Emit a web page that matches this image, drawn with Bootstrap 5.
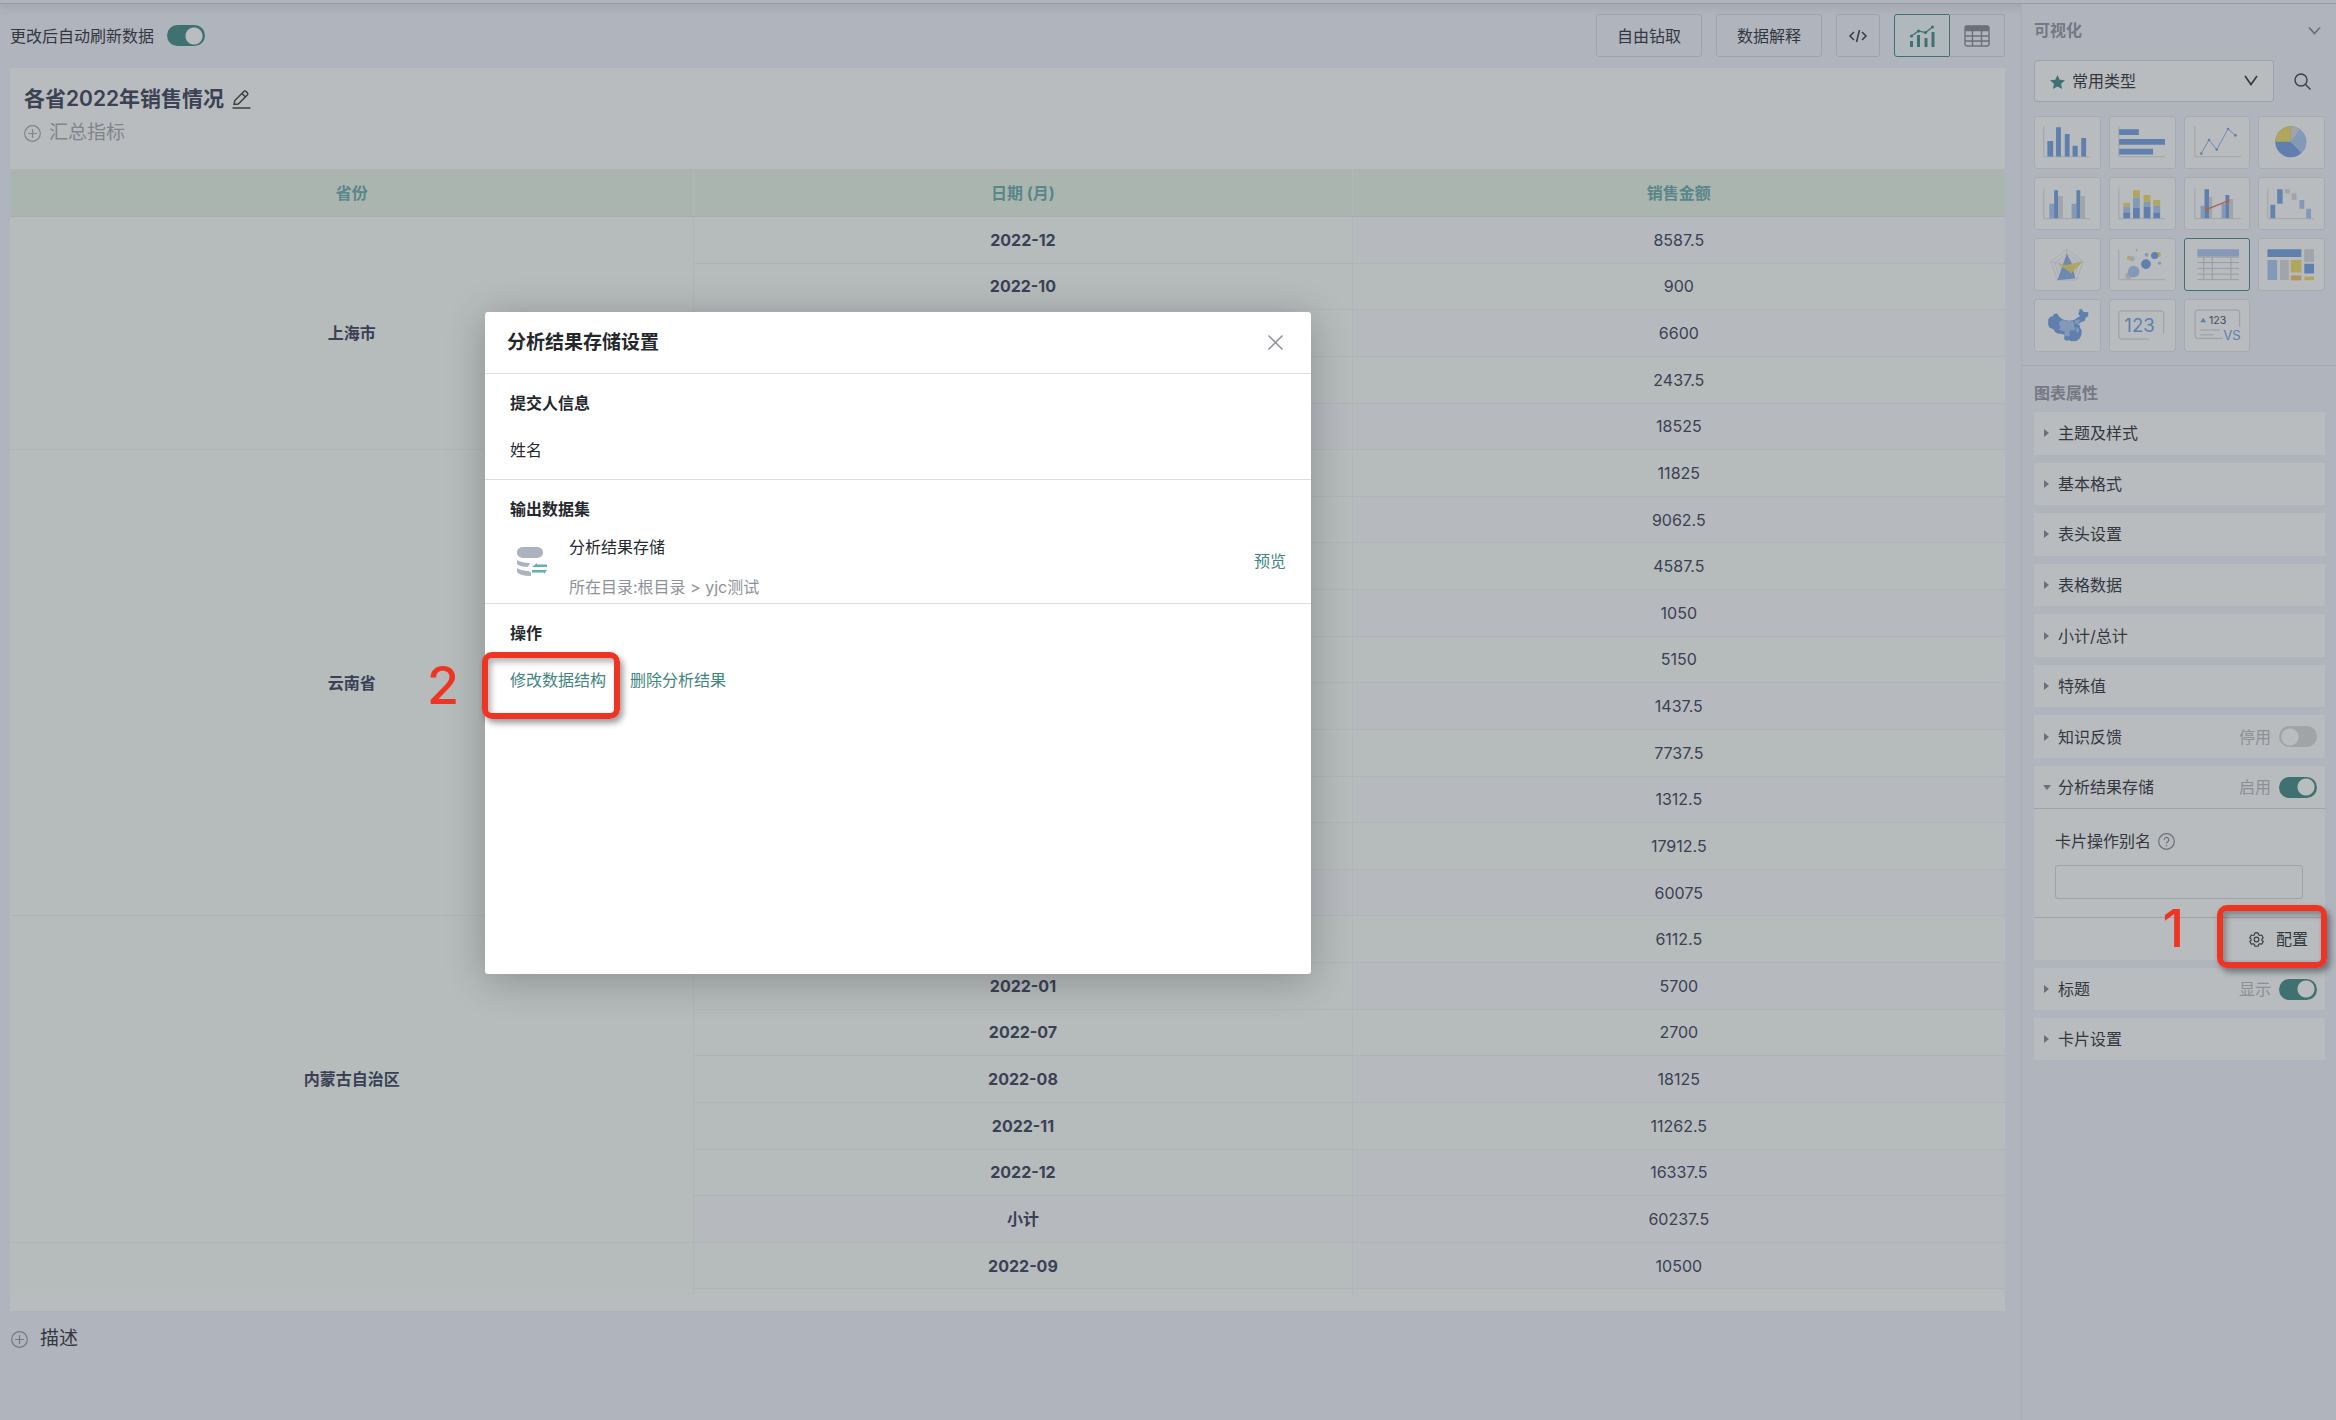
<!DOCTYPE html>
<html lang="zh-CN">
<head>
<meta charset="utf-8">
<meta name="viewport" content="width=device-width, initial-scale=1">
<title>各省2022年销售情况</title>
<link rel="stylesheet" href="https://cdn.jsdelivr.net/npm/bootstrap@5.3.0/dist/css/bootstrap.min.css">
<style>
:root{--page:#b0b4bd;--paper:#b8bcbf;--line:#9da2ab;--soft:#a7abb0;--ink:#33383f;--dim:#747983;--teal:#3f7170;--red:#ee3524;--blue:#5f7fae;--sky:#8499b8;--gold:#b0a65c;--ash:#a1a5a9}
body{background:var(--page);color:var(--ink);font:16px/24px Inter,"Noto Sans CJK SC",sans-serif;min-height:100vh}
button,input,select{font:inherit;color:inherit}
svg{display:block;flex:none}
.topline{height:4px;border-bottom:1px solid #979ba5;box-shadow:0 2px 8px rgba(60,65,80,.25)}
.workarea{padding:10px 16px 0 10px;min-width:0}
.tool-row{height:43px;margin-bottom:11px}
.tool-set{gap:14px}
.tool-btn{height:43px;border:1px solid var(--line);border-radius:3px;background:transparent;padding:0 20px}
.tool-btn.narrow{width:44px;padding:0}
.tool-btn.view{width:56px;padding:0}
.tool-btn.view+.view{border-left:0;margin-left:-1px;border-radius:0 3px 3px 0}
.tool-btn.view.on{border-color:var(--teal);background:#b1b8bd;border-radius:3px 0 0 3px}
.toggler.form-check-input{width:38px;height:21px;margin:0;border:0;border-radius:11px;background-color:#a0a4a6;background-image:radial-gradient(circle at 8px 8px,#b9bdc0 7px,transparent 8px);background-size:16px 16px;background-repeat:no-repeat;background-position:3px center;flex:none;box-shadow:none}
.toggler.form-check-input,.toggler.form-check-input:checked{background-image:radial-gradient(circle at center,#b9bdc0 8px,transparent 9px);background-size:18px 18px;background-position:2px center}
.toggler.form-check-input:checked{background-color:var(--teal);background-position:18px center}
.auto-label{margin-right:13px}
.report{background:var(--paper);padding-bottom:17px}
.report-head{height:101px;padding:17px 14px 0}
.report-head h1{font-size:21px;line-height:28px;font-weight:600;color:#3a4253;margin:0}
.report-head .add-btn{margin-top:6px}
.add-btn{border:0;background:none;padding:0;font-size:19px;line-height:28px;color:#7f848d}
.table-clip{height:1125px;overflow:hidden}
.pivot{height:1167px;width:100%;table-layout:fixed;border-collapse:separate;border-spacing:0;text-align:center;color:#3a4154}
.pivot th,.pivot td{padding:0;vertical-align:middle;border-right:1px solid #b0b6b7;border-bottom:1px solid #afb5b7;background:#b6bbbc}
.pivot tbody tr{height:46px}
.pivot thead th{height:48px;background:#abb5af;color:#588788;border-right-color:#b0b7b6;border-bottom-color:#a5abb7}
.pivot tr>:last-child{border-right:0}
.pivot tbody th{font-weight:700}
.pivot td.a,.pivot th.sum{background:#b6babf}
.pivot .c1{width:34.3%}.pivot .c2{width:33%}
.describe{margin:14px 0 0;padding-left:1px}
.describe .add-btn{color:var(--ink);gap:12px}
.sidebar{width:315px;flex:none;border-left:1px solid #a9adb6;background:#b0b4bd}
.side-title{font-weight:600;color:var(--dim)}
.side-top{padding:14px 11px 13px 12px}
.pick-row{margin-top:18px;gap:20px}
.type-pick{height:42px;width:240px;border:1px solid var(--line);border-radius:3px;background:var(--paper);padding:0 37px;appearance:none;color:var(--ink)}
.pick-box .star{position:absolute;left:16px;top:15px}
.pick-box .arrow{position:absolute;right:16px;top:15px;pointer-events:none}
.plain{border:0;background:none;padding:0}
.kinds{display:grid;grid-template-columns:repeat(4,1fr);gap:8px;margin-top:14px}
.kind{height:53px;border:1px solid var(--soft);border-radius:3px;background:var(--paper);padding:0}
.kind.on{border-color:var(--teal)}
.kind svg{width:100%;height:100%}
.side-bottom{border-top:1px solid #a3a7af;padding:15px 11px 0 12px}
.stack{min-height:346px;margin-top:7px}
.fold{background:var(--paper);min-height:42px;padding:0 8px 0 10px}
.fold .plain{text-align:left}
.state{color:#8b9097}
.opt-body{background:var(--paper);border-top:1px solid var(--line);padding:20px 22px 18px 21px}
.opt-body label{gap:7px;margin-bottom:12px}
.opt-body input{width:100%;height:34px;border:1px solid var(--line);border-radius:3px;background:transparent}
.opt-foot{background:var(--paper);border-top:1px solid var(--line);height:43px;padding-right:17px}
.opt-foot .plain{gap:12px}
.store-modal{position:absolute;left:485px;top:312px;width:826px;height:662px;overflow:visible;color:#24282c}
.store-modal .modal-content{border:0;border-radius:3px;height:662px;box-shadow:0 6px 40px rgba(0,0,0,.24);color:inherit}
.store-modal .modal-header{height:62px;padding:0 26px 0 22px;border-bottom:1px solid #dcdddf}
.store-modal h2{font-size:19px;line-height:28px;font-weight:600;margin:0}
.store-modal h3{font-size:16px;line-height:24px;font-weight:700;margin:0}
.part{padding:17px 25px 0;border-bottom:1px solid #dcdddf}
.part.person{padding-bottom:17px}
.part:last-child{border-bottom:0}
.part-line{margin-top:23px}
.dataset{margin-top:14px;padding-bottom:4px}
.dataset svg{margin:0 21px 12px 7px}
.dataset a{margin-bottom:12px}
.link-row{gap:24px}
.store-modal a{color:#3f8580;text-decoration:none}
.path-text{color:#8d9299}
.callout-box{position:absolute;border:6px solid var(--red);border-radius:10px;box-shadow:3px 4px 6px rgba(0,0,0,.4),inset 3px 4px 6px rgba(0,0,0,.3);pointer-events:none;z-index:1060}
.callout-num{position:absolute;font:500 52px/52px Inter,sans-serif;color:var(--red);z-index:1060}
.box-two{left:482px;top:652px;width:138px;height:67px}
.num-two{left:427px;top:660px}
.box-one{right:9px;top:905px;width:110px;height:63px}
.num-one{right:152px;top:903px}
</style>
<script src="https://cdn.jsdelivr.net/npm/bootstrap@5.3.0/dist/js/bootstrap.bundle.min.js"></script>
</head>
<body class="position-relative d-flex flex-column">
<div class="topline"></div>
<div class="d-flex flex-grow-1">
<main class="workarea flex-grow-1">
  <div class="tool-row d-flex align-items-center">
    <label class="auto-label" for="auto">更改后自动刷新数据</label>
    <input class="form-check-input toggler" type="checkbox" role="switch" id="auto" checked>
    <div class="tool-set d-flex ms-auto">
      <button class="tool-btn" type="button">自由钻取</button>
      <button class="tool-btn" type="button">数据解释</button>
      <button class="tool-btn narrow d-flex align-items-center justify-content-center" type="button" aria-label="代码"><svg width="20" height="16" viewBox="0 0 20 16" fill="none" stroke="#3a3f46" stroke-width="1.6"><path d="M6 4 2 8l4 4M14 4l4 4-4 4M11.500 2 8.500 14"/></svg></button>
      <div class="d-flex">
      <button class="tool-btn view on d-flex align-items-center justify-content-center" type="button" aria-label="图表"><svg width="26" height="22" viewBox="0 0 26 22" fill="#3f7170"><path d="M1 16h3v6H1zM8 10h3v12H8zM15.500 13h3v9h-3zM22.500 7h3v15h-3z"/><path d="M2.500 11 9.500 6l7 1.500L23.500 2" fill="none" stroke="#3f7170" stroke-width="1.200"/><circle cx="2.500" cy="11" r="1.600"/><circle cx="9.500" cy="6" r="1.600"/><circle cx="16.500" cy="7.500" r="1.600"/><circle cx="23.500" cy="2" r="1.600"/></svg></button>
      <button class="tool-btn view d-flex align-items-center justify-content-center" type="button" aria-label="表格"><svg width="26" height="22" viewBox="0 0 26 22" fill="none" stroke="#6b7079" stroke-width="1.400"><rect x="1" y="1" width="24" height="20" rx="2"/><path d="M1 11h24M1 16h24M8.500 6v15M17.500 6v15"/><path d="M2 1.500h22v4H2z" fill="#6b7079"/></svg></button>
      </div>
    </div>
  </div>
  <section class="report">
    <div class="report-head">
      <div class="d-flex align-items-center gap-2"><h1>各省2022年销售情况</h1>
      <button class="plain" type="button" aria-label="编辑"><svg width="19" height="19" viewBox="0 0 19 19" fill="none" stroke="#3a3f46" stroke-width="1.500"><path d="M.5 18h18M2 14.500l.8-4L11.800 1.500a1.600 1.600 0 0 1 2.300 0l1.200 1.200a1.600 1.600 0 0 1 0 2.300L6.300 14zM10 3.500l3.500 3.500"/></svg></button></div>
      <button class="add-btn d-flex align-items-center gap-2" type="button"><svg width="17" height="17" viewBox="0 0 17 17" fill="none" stroke="#7f848d" stroke-width="1.200"><circle cx="8.500" cy="8.500" r="7.800"/><path d="M8.500 4v9M4 8.500h9"/></svg>汇总指标</button>
    </div>
    <div class="table-clip">
    <table class="pivot">
      <thead><tr><th class="c1">省份</th><th class="c2">日期 (月)</th><th>销售金额</th></tr></thead>
      <tbody>
        <tr><th rowspan="5">上海市</th><th>2022-12</th><td class="a">8587.5</td></tr>
        <tr><th>2022-10</th><td>900</td></tr>
        <tr><th></th><td class="a">6600</td></tr>
        <tr><th></th><td>2437.5</td></tr>
        <tr><th class="sum"></th><td class="a">18525</td></tr>
        <tr><th rowspan="10">云南省</th><th></th><td>11825</td></tr>
        <tr><th></th><td class="a">9062.5</td></tr>
        <tr><th></th><td>4587.5</td></tr>
        <tr><th></th><td class="a">1050</td></tr>
        <tr><th></th><td>5150</td></tr>
        <tr><th></th><td class="a">1437.5</td></tr>
        <tr><th></th><td>7737.5</td></tr>
        <tr><th></th><td class="a">1312.5</td></tr>
        <tr><th></th><td>17912.5</td></tr>
        <tr><th class="sum"></th><td class="a">60075</td></tr>
        <tr><th rowspan="7">内蒙古自治区</th><th></th><td>6112.5</td></tr>
        <tr><th>2022-01</th><td class="a">5700</td></tr>
        <tr><th>2022-07</th><td>2700</td></tr>
        <tr><th>2022-08</th><td class="a">18125</td></tr>
        <tr><th>2022-11</th><td>11262.5</td></tr>
        <tr><th>2022-12</th><td class="a">16337.5</td></tr>
        <tr><th class="sum">小计</th><td class="a">60237.5</td></tr>
        <tr><th rowspan="2"></th><th>2022-09</th><td class="a">10500</td></tr>
        <tr><th></th><td></td></tr>
      </tbody>
    </table>
    </div>
  </section>
  <div class="describe"><button class="add-btn d-flex align-items-center" type="button"><svg width="17" height="17" viewBox="0 0 17 17" fill="none" stroke="#747983" stroke-width="1.200"><circle cx="8.500" cy="8.500" r="7.800"/><path d="M8.500 4v9M4 8.500h9"/></svg>描述</button></div>
</main>

<aside class="sidebar">
  <div class="side-top">
    <div class="d-flex align-items-center justify-content-between"><span class="side-title">可视化</span>
      <button class="plain me-1" type="button" aria-label="收起"><svg width="13" height="9" viewBox="0 0 13 9" fill="none" stroke="#6b7079" stroke-width="1.800"><path d="M1 1.500l5.500 6 5.500-6"/></svg></button></div>
    <div class="pick-row d-flex align-items-center">
      <div class="pick-box position-relative">
        <select class="type-pick" aria-label="图表类型"><option>常用类型</option></select>
        <svg class="star" width="15" height="14" viewBox="0 0 15 14" fill="#3f7170"><path d="M7.500 0l2.200 4.700 5.300.6-3.900 3.500 1 5.200-4.600-2.600L2.900 14l1-5.200L0 5.300l5.300-.6z"/></svg>
        <svg class="arrow" width="14" height="11" viewBox="0 0 14 11" fill="none" stroke="#33383f" stroke-width="1.600"><path d="M1 1l6 8.500L13 1"/></svg>
      </div>
      <button class="plain" type="button" aria-label="搜索"><svg width="17" height="17" viewBox="0 0 17 17" fill="none" stroke="#3a3f46" stroke-width="1.400"><circle cx="7" cy="7" r="6"/><path d="M11.500 11.500l5 5"/></svg></button>
    </div>
    <div class="kinds">
      <button class="kind" type="button" aria-label="柱状图"><svg viewBox="0 0 200 158"><path d="M27 29v94h143" fill="none" stroke="#a1a5a9" stroke-width="3"/><path d="M38 74h18v48H38zM65 32h15v90H65zM92 53h15v69H92zM116 89h16v33h-16zM143 65h15v57h-15z" fill="#5f7fae"/></svg></button>
      <button class="kind" type="button" aria-label="条形图"><svg viewBox="0 0 200 158"><path d="M27 29v94h143" fill="none" stroke="#a1a5a9" stroke-width="3"/><path d="M28 38h61v18H28zM28 68h142v18H28zM28 98h105v18H28z" fill="#5f7fae"/></svg></button>
      <button class="kind" type="button" aria-label="折线图"><svg viewBox="0 0 200 158"><path d="M30 29v94h143" fill="none" stroke="#a1a5a9" stroke-width="3"/><g fill="#5f7fae"><path d="M50 113l24-42 24 30 35-64 23 20" fill="none" stroke="#5f7fae" stroke-width="2.500"/><circle cx="50" cy="113" r="4"/><circle cx="74" cy="71" r="4"/><circle cx="98" cy="101" r="4"/><circle cx="133" cy="37" r="4"/><circle cx="156" cy="57" r="4"/></g></svg></button>
      <button class="kind" type="button" aria-label="饼图"><svg viewBox="0 0 200 158"><circle cx="98" cy="77" r="48" fill="#5f7fae"/><path d="M98 77V29a48 48 0 0 1 33 83z" fill="#8499b8"/><path d="M98 77V29a48 48 0 0 1 28 9z" fill="#a1a5a9"/><path d="M98 77H50a48 48 0 0 1 48-48z" fill="#b0a65c"/></svg></button>
      <button class="kind" type="button" aria-label="簇状柱图"><svg viewBox="0 0 200 158"><path d="M27 32v94h143" fill="none" stroke="#a1a5a9" stroke-width="3"/><path d="M44 80h15v45H44zM113 80h15v45h-15z" fill="#8499b8"/><path d="M59 38h12v87H59zM128 38h12v87h-12z" fill="#5f7fae"/><path d="M71 56h15v69H71zM140 56h15v69h-15z" fill="#a1a5a9"/></svg></button>
      <button class="kind" type="button" aria-label="堆积柱图"><svg viewBox="0 0 200 158"><path d="M27 32v94h143" fill="none" stroke="#a1a5a9" stroke-width="3"/><path d="M41 77h21v12H41zM71 38h21v24H71zM104 53h21v21h-21zM134 68h21v18h-21z" fill="#b0a65c"/><path d="M41 89h21v18H41zM71 62h21v30H71zM104 74h21v15h-21zM134 86h21v21h-21z" fill="#8499b8"/><path d="M41 107h21v18H41zM71 92h21v33H71zM104 89h21v36h-21zM134 107h21v18h-21z" fill="#5f7fae"/></svg></button>
      <button class="kind" type="button" aria-label="双轴图"><svg viewBox="0 0 200 158"><path d="M30 32v94h143" fill="none" stroke="#a1a5a9" stroke-width="3"/><path d="M48 86h12v39H48zM113 80h12v45h-12z" fill="#8499b8"/><path d="M60 35h14v90H60zM125 53h12v72h-12z" fill="#5f7fae"/><path d="M74 59h10v66H74zM137 65h12v60h-12z" fill="#a1a5a9"/><path d="M67 97l66-26" stroke="#ad6250" stroke-width="4"/><circle cx="67" cy="97" r="5" fill="#ad6250"/><circle cx="133" cy="71" r="5" fill="#ad6250"/></svg></button>
      <button class="kind" type="button" aria-label="瀑布图"><svg viewBox="0 0 200 158"><path d="M27 32v94h143" fill="none" stroke="#a1a5a9" stroke-width="3"/><path d="M35 83h15v42H35zM56 35h17v45H56z" fill="#6583b0"/><path d="M80 35h15v12H80zM101 47h15v21h-15z" fill="#a1a5a9"/><path d="M125 68h15v27h-15zM146 95h15v30h-15z" fill="#8499b8"/></svg></button>
      <button class="kind" type="button" aria-label="雷达图"><svg viewBox="0 0 200 158"><g fill="none" stroke="#a1a5a9" stroke-width="2"><path d="M98 32l51 38-20 57H69L49 70zM98 44l38 29-14 44H76L61 74zM98 56l27 20-10 30H84L73 77z"/><path d="M98 32v50l51-12M98 82l31 45M98 82l-29 45M98 82L49 70"/></g><path d="M98 45l18 35 8 42-55 6 14-40z" fill="#6c86b0" opacity=".95"/><path d="M73 79l28 1 48-11-37 38-12-10z" fill="#b0a65c" opacity=".93"/></svg></button>
      <button class="kind" type="button" aria-label="散点图"><svg viewBox="0 0 200 158"><path d="M27 32v94h143" fill="none" stroke="#a1a5a9" stroke-width="3"/><g fill="#b0a65c"><circle cx="58" cy="58" r="6"/><circle cx="149" cy="48" r="8"/></g><g fill="#a1a5a9"><circle cx="68" cy="61" r="8"/><circle cx="57" cy="114" r="10"/></g><g fill="#8499b8"><circle cx="73" cy="101" r="18"/><circle cx="153" cy="75" r="5"/><circle cx="113" cy="49" r="6"/><circle cx="82" cy="35" r="3"/></g><g fill="#5f7fae"><circle cx="111" cy="78" r="15"/><circle cx="138" cy="51" r="11"/></g></svg></button>
      <button class="kind on" type="button" aria-label="表格"><svg viewBox="0 0 200 158"><path d="M38 32h129v22H38z" fill="#8499b8"/><path d="M38 56h129M38 73h129M38 91h129M38 109h129M38 126h129M58 56v70M84 56v70M142 56v70" stroke="#979ba1" stroke-width="3"/></svg></button>
      <button class="kind" type="button" aria-label="矩形树图"><svg viewBox="0 0 200 158"><path d="M26 32h105v24H26zM140 77h30v30h-30z" fill="#5f7fae"/><path d="M26 65h30v62H26z" fill="#8499b8"/><path d="M65 65h27v62H65zM140 32h30v39h-30z" fill="#a1a5a9"/><path d="M98 65h33v39H98zM140 116h30v12h-30z" fill="#b0a65c"/><path d="M98 113h33v15H98z" fill="#b39460"/></svg></button>
      <button class="kind" type="button" aria-label="地图"><svg viewBox="0 0 200 158"><path d="M41 60l6-8 8-2 3-7 10-1 7 10 10 8 10 3 12 1 14-2 8-6 10-6-6-8 5-6-2-6 7-3 8 10 14 1-1 12-7 4-3 10-12 5-10 8 8 2-2 6 6 8 0 14-6 12-10 8-8 1-4-1-6 1-4-4-8 2-8-4 1-14-8-3-14-1-8-6-4-7-12-5-5-10z" fill="#5f7fae"/><path d="M76 66l12-4 14 4 14-2 6 10-2 8 6 6-6 7-10-2-5 8 4 8-10 4-10-5 4-10-8-3-12-3 6-8-5-8zM122 66l9-6 8 3-4 8-9 4zM128 84l8 6-1 10-9-2z" fill="#8499b8"/><path d="M138 106l4 1-2 8-3-2zM113 121l6 0-2 5-4 0z" fill="#5f7fae"/></svg></button>
      <button class="kind" type="button" aria-label="指标卡"><svg viewBox="0 0 200 158"><path d="M120 121H35q-8 0-8-8V42q0-8 8-8h123q8 0 8 8v62" fill="none" stroke="#979ba1" stroke-width="3"/><text x="44" y="99" font-size="58" font-family="Inter" fill="#5f7fae">123</text></svg></button>
      <button class="kind" type="button" aria-label="对比指标卡"><svg viewBox="0 0 200 158"><path d="M116 119H39q-8 0-8-8V39q0-8 8-8h122q8 0 8 8v45M47 93h60M47 108h40" fill="none" stroke="#979ba1" stroke-width="3"/><path d="M47 69l9-14 9 14z" fill="#5f7fae"/><text x="74" y="75" font-size="33" font-family="Inter" fill="#3f4c5c">123</text><text x="118" y="123" font-size="41" font-family="Inter" fill="#5f7fae">VS</text></svg></button>
    </div>
  </div>
  <div class="side-bottom">
    <div class="side-title">图表属性</div>
    <div class="stack d-flex flex-column gap-2">
      <div class="fold d-flex align-items-center flex-fill"><button class="plain d-flex align-items-center gap-2" type="button"><svg width="6" height="8" viewBox="0 0 6 8" fill="#6b7079"><path d="M0 0l5 4-5 4z"/></svg>主题及样式</button></div>
      <div class="fold d-flex align-items-center flex-fill"><button class="plain d-flex align-items-center gap-2" type="button"><svg width="6" height="8" viewBox="0 0 6 8" fill="#6b7079"><path d="M0 0l5 4-5 4z"/></svg>基本格式</button></div>
      <div class="fold d-flex align-items-center flex-fill"><button class="plain d-flex align-items-center gap-2" type="button"><svg width="6" height="8" viewBox="0 0 6 8" fill="#6b7079"><path d="M0 0l5 4-5 4z"/></svg>表头设置</button></div>
      <div class="fold d-flex align-items-center flex-fill"><button class="plain d-flex align-items-center gap-2" type="button"><svg width="6" height="8" viewBox="0 0 6 8" fill="#6b7079"><path d="M0 0l5 4-5 4z"/></svg>表格数据</button></div>
      <div class="fold d-flex align-items-center flex-fill"><button class="plain d-flex align-items-center gap-2" type="button"><svg width="6" height="8" viewBox="0 0 6 8" fill="#6b7079"><path d="M0 0l5 4-5 4z"/></svg>小计/总计</button></div>
      <div class="fold d-flex align-items-center flex-fill"><button class="plain d-flex align-items-center gap-2" type="button"><svg width="6" height="8" viewBox="0 0 6 8" fill="#6b7079"><path d="M0 0l5 4-5 4z"/></svg>特殊值</button></div>
      <div class="fold d-flex align-items-center flex-fill gap-2"><button class="plain d-flex align-items-center gap-2 me-auto" type="button"><svg width="6" height="8" viewBox="0 0 6 8" fill="#6b7079"><path d="M0 0l5 4-5 4z"/></svg>知识反馈</button><label class="state" for="fb">停用</label><input class="form-check-input toggler" type="checkbox" role="switch" id="fb"></div>
    </div>
    <div class="mt-2">
      <div class="fold d-flex align-items-center gap-2"><button class="plain d-flex align-items-center gap-2 me-auto" type="button"><svg width="6" height="8" viewBox="0 0 6 8" fill="#6b7079" overflow="visible"><path d="M-1 2h8L3 7z"/></svg>分析结果存储</button><label class="state" for="store">启用</label><input class="form-check-input toggler" type="checkbox" role="switch" id="store" checked></div>
      <div class="opt-body">
        <label class="d-flex align-items-center" for="alias">卡片操作别名<svg width="17" height="17" viewBox="0 0 17 17" fill="none" stroke="#6b7079" stroke-width="1.200"><circle cx="8.500" cy="8.500" r="7.800"/><path d="M6.200 6.800a2.300 2.300 0 1 1 3.500 1.900q-1.200.7-1.200 1.800M8.500 12v1.300"/></svg></label>
        <input type="text" id="alias">
      </div>
      <div class="opt-foot d-flex align-items-center justify-content-end"><button class="plain d-flex align-items-center" type="button"><svg width="15" height="15" viewBox="0 0 16 16" fill="none" stroke="#3a3f46" stroke-width="1.300" stroke-linejoin="round"><path d="M6.300 1h3.400l.6 2 1.200.7 2-.5 1.700 2.900-1.500 1.500v1l1.500 1.500-1.700 2.900-2-.5-1.200.7-.6 2H6.300l-.6-2-1.200-.7-2 .5L.8 10.100l1.500-1.500v-1L.8 6.100l1.700-2.900 2 .5L5.700 3z"/><circle cx="8" cy="8" r="2.500"/></svg>配置</button></div>
    </div>
    <div class="fold d-flex align-items-center gap-2 mt-2"><button class="plain d-flex align-items-center gap-2 me-auto" type="button"><svg width="6" height="8" viewBox="0 0 6 8" fill="#6b7079"><path d="M0 0l5 4-5 4z"/></svg>标题</button><label class="state" for="ttl">显示</label><input class="form-check-input toggler" type="checkbox" role="switch" id="ttl" checked></div>
    <div class="fold d-flex align-items-center mt-2"><button class="plain d-flex align-items-center gap-2" type="button"><svg width="6" height="8" viewBox="0 0 6 8" fill="#6b7079"><path d="M0 0l5 4-5 4z"/></svg>卡片设置</button></div>
  </div>
</aside>
</div>

<div class="modal d-block store-modal" role="dialog" aria-labelledby="dlg">
  <div class="modal-content">
    <div class="modal-header"><h2 id="dlg">分析结果存储设置</h2>
      <button class="plain" type="button" aria-label="关闭"><svg width="19" height="19" viewBox="0 0 19 19" fill="none" stroke="#8b8f94" stroke-width="1.500"><path d="M2.500 2.500l14 14M16.500 2.500l-14 14"/></svg></button></div>
    <div class="part person"><h3>提交人信息</h3><div class="part-line">姓名</div></div>
    <div class="part"><h3>输出数据集</h3>
      <div class="dataset d-flex align-items-center">
        <svg width="31" height="29" viewBox="0 0 31 29" fill="#adb3be"><rect width="26" height="11" rx="6" ry="5"/><path d="M0 13q5 3 13 3l-2 4Q3 20 0 17zM0 21q4 3 12 3l2 2v3Q3 29 0 25z"/><path d="M15 20l5-4v1.500h10V20zM30 23l-3 4v-1.500H15V23z" fill="#5fb0b5"/></svg>
        <div><div>分析结果存储</div><div class="path-text mt-3">所在目录:根目录 &gt; yjc测试</div></div>
        <a class="ms-auto" href="#">预览</a>
      </div></div>
    <div class="part"><h3>操作</h3><div class="link-row part-line d-flex"><a href="#">修改数据结构</a><a href="#">删除分析结果</a></div></div>
  </div>
</div>
<div class="callout-box box-two"></div><span class="callout-num num-two">2</span>
<div class="callout-box box-one"></div><span class="callout-num num-one">1</span>
</body>
</html>
